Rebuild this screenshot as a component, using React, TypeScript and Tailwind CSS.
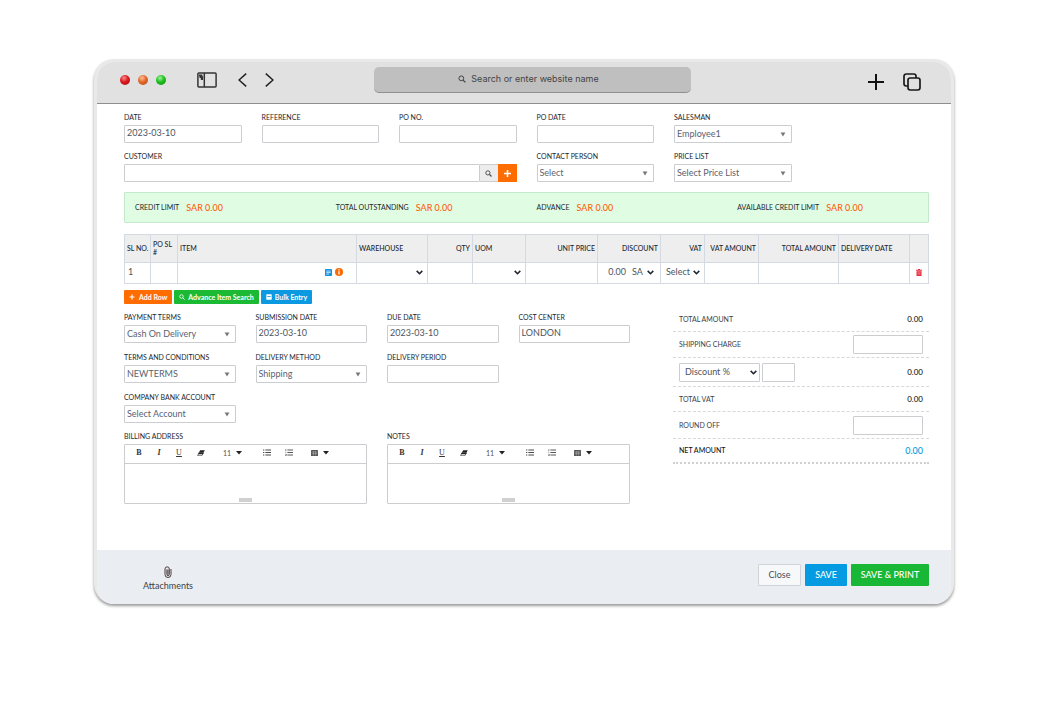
import React, { useId } from "react";

const fieldBox =
  "block h-[18px] w-full min-w-0 rounded-[1px] border border-[#cccdd1] bg-white px-[2px] text-[9px] leading-[12px] text-[#4d5560] outline-none";
const labelText = "block h-[10px] text-[7px] leading-[10px] text-[#23272e] whitespace-nowrap";

function Field({ label, value = "", className = "" }: { label: string; value?: string; className?: string }) {
  const id = useId();
  return (
    <div className={"min-w-0 " + className}>
      <label htmlFor={id} className={labelText}>{label}</label>
      <input id={id} type="text" defaultValue={value} className={fieldBox + " mt-[3px] pb-[3px]"} />
    </div>
  );
}

function SelectField({ label, value, className = "" }: { label: string; value: string; className?: string }) {
  const id = useId();
  return (
    <div className={"min-w-0 " + className}>
      <label htmlFor={id} className={labelText}>{label}</label>
      <div className="relative mt-[3px]">
        <select id={id} className={fieldBox + " appearance-none pr-4 text-[#5a5f72]"}>
          <option>{value}</option>
        </select>
        <svg viewBox="0 0 6 5" className="pointer-events-none absolute top-[7px] right-[6px] h-[5px] w-[6px]" fill="#777">
          <path d="M0.6 0.6h4.8L3 4.4z" />
        </svg>
      </div>
    </div>
  );
}

function Chevron({ className = "" }: { className?: string }) {
  return (
    <svg viewBox="0 0 7 5" className={"pointer-events-none h-[5px] w-[7px] " + className} fill="none" stroke="#1f2530" strokeWidth="1.6">
      <path d="M0.7 0.9L3.5 3.7L6.3 0.9" />
    </svg>
  );
}

function CellSelect({ label, value = "", className = "" }: { label: string; value?: string; className?: string }) {
  return (
    <div className={"relative " + className}>
      <select aria-label={label} className="block h-[18px] w-full appearance-none bg-transparent pr-2 pl-[2px] text-[9px] text-[#4d5560] outline-none">
        <option>{value}</option>
      </select>
      <Chevron className="absolute top-[7px] right-0" />
    </div>
  );
}

function SearchIcon({ className = "" }: { className?: string }) {
  return (
    <svg viewBox="0 0 8 8" className={className} fill="none" stroke="currentColor">
      <circle cx="3.3" cy="3.3" r="2.4" strokeWidth="1" />
      <path d="M5.1 5.1L7.4 7.4" strokeWidth="1.3" />
    </svg>
  );
}

function Titlebar() {
  return (
    <header className="flex h-[42px] items-center border-b border-[#8e8e8e] bg-[#e1e1e1] pr-[30px] pb-[5px] pl-[23px] text-[#222]">
      <div className="flex flex-1 items-center">
        <div className="flex gap-2">
          <span className="size-[10px] rounded-full bg-[radial-gradient(circle_at_40%_30%,#ff8a8a_0%,#d8191f_45%,#a00d12_100%)]" />
          <span className="size-[10px] rounded-full bg-[radial-gradient(circle_at_40%_30%,#ffc09a_0%,#e2672a_45%,#b34a17_100%)]" />
          <span className="size-[10px] rounded-full bg-[radial-gradient(circle_at_40%_30%,#9bf59b_0%,#1fbf1f_45%,#0f8a12_100%)]" />
        </div>
        <button aria-label="Sidebar" className="ml-[31px]">
          <svg viewBox="0 0 20 16" className="h-4 w-5" fill="none" stroke="#333" strokeWidth="1.5">
            <rect x="0.9" y="0.9" width="18.2" height="14.2" rx="1" />
            <path d="M7.3 1v14" />
            <path d="M2 3.4h3.4M2.500 5.200h3.600M3.800 7h2.200" strokeWidth="1.8" />
          </svg>
        </button>
        <button aria-label="Back" className="ml-[21px]">
          <svg viewBox="0 0 9 14" className="h-[14px] w-[9px]" fill="none" stroke="#222" strokeWidth="1.5">
            <path d="M8.2 0.6L1 7l7.2 6.4" />
          </svg>
        </button>
        <button aria-label="Forward" className="ml-[18px]">
          <svg viewBox="0 0 9 14" className="h-[14px] w-[9px]" fill="none" stroke="#222" strokeWidth="1.5">
            <path d="M0.8 0.6L8 7l-7.2 6.4" />
          </svg>
        </button>
      </div>
      <button className="ml-6 flex h-[26px] w-[317px] items-center justify-center gap-[5px] rounded-[5px] border-b border-[#909090] bg-[#bfbfbf] pr-2 pb-[2px] font-[Inter,sans-serif] text-[9px] text-[#444]">
        <SearchIcon className="size-2" />
        Search or enter website name
      </button>
      <div className="flex flex-1 items-center justify-end gap-[19px] pt-1">
        <button aria-label="New tab">
          <svg viewBox="0 0 16 16" className="size-4" stroke="#111" strokeWidth="2">
            <path d="M8 0v16M0 8h16" />
          </svg>
        </button>
        <button aria-label="Tabs">
          <svg viewBox="0 0 18 18" className="size-[18px]" fill="none" stroke="#1a1a1a" strokeWidth="1.7">
            <path d="M5 13H3.200a2.200 2.200 0 0 1-2.200-2.200V3.200A2.200 2.200 0 0 1 3.200 1h7.600A2.200 2.200 0 0 1 13 3.200V5" />
            <rect x="5" y="5" width="12" height="12" rx="2.200" />
          </svg>
        </button>
      </div>
    </header>
  );
}

const credit = ["CREDIT LIMIT", "TOTAL OUTSTANDING", "ADVANCE", "AVAILABLE CREDIT LIMIT"];

function ItemsTable() {
  const th = "border border-[#d5d9e2] px-[2px] pb-[2px] text-[7px] leading-[8px] font-medium text-[#23272e]";
  const td = "h-[21px] border border-[#d5d9e2] px-[3px] pt-0 pb-[2px] text-[9px] text-[#4d5560]";
  return (
    <table className="mt-[11px] w-full table-fixed border-collapse">
      <colgroup>
        <col className="w-[26px]" />
        <col className="w-[27px]" />
        <col />
        <col className="w-[71px]" />
        <col className="w-[45px]" />
        <col className="w-[53px]" />
        <col className="w-[72px]" />
        <col className="w-[63px]" />
        <col className="w-[44px]" />
        <col className="w-[54px]" />
        <col className="w-[80px]" />
        <col className="w-[71px]" />
        <col className="w-[19px]" />
      </colgroup>
      <thead>
        <tr className="h-[28px] bg-[#eeeeee] text-left">
          <th className={th + " whitespace-nowrap"}>SL NO.</th>
          <th className={th}>PO SL #</th>
          <th className={th}>ITEM</th>
          <th className={th}>WAREHOUSE</th>
          <th className={th + " text-right"}>QTY</th>
          <th className={th}>UOM</th>
          <th className={th + " text-right"}>UNIT PRICE</th>
          <th className={th + " text-right"}>DISCOUNT</th>
          <th className={th + " text-right"}>VAT</th>
          <th className={th + " text-right"}>VAT AMOUNT</th>
          <th className={th + " text-right"}>TOTAL AMOUNT</th>
          <th className={th}>DELIVERY DATE</th>
          <th className={th} aria-label="Actions" />
        </tr>
      </thead>
      <tbody>
        <tr>
          <td className={td}>1</td>
          <td className={td} />
          <td className={td}>
            <div className="flex items-center justify-end gap-[3px] pr-[10px]">
              <button aria-label="Description">
                <svg viewBox="0 0 7 7" className="size-[7px]">
                  <rect width="7" height="7" rx="0.800" fill="#1592dc" />
                  <path d="M1.300 2.100h4.400M1.300 3.600h4.400M1.300 5.100h2.600" stroke="#fff" strokeWidth="0.700" />
                </svg>
              </button>
              <button aria-label="Item information">
                <svg viewBox="0 0 8 8" className="size-2">
                  <circle cx="4" cy="4" r="4" fill="#fb6a02" />
                  <path d="M4 1.300v1.200M4 3.300v3.200" stroke="#fff" strokeWidth="1.200" />
                </svg>
              </button>
            </div>
          </td>
          <td className={td}><CellSelect label="Warehouse" className="mr-[1px]" /></td>
          <td className={td} />
          <td className={td}><CellSelect label="Unit of measure" className="mr-[1px]" /></td>
          <td className={td} />
          <td className={td}>
            <div className="flex items-center justify-end pr-[3px]">
              <span>0.00</span>
              <CellSelect label="Discount unit" value="SA" className="ml-1 w-[24px]" />
            </div>
          </td>
          <td className={td}><CellSelect label="VAT" value="Select" className="mr-[1px]" /></td>
          <td className={td} />
          <td className={td} />
          <td className={td} />
          <td className={td}>
            <button aria-label="Delete row" className="mx-auto block">
              <svg viewBox="0 0 6 7" className="h-[7px] w-[6px]" fill="#e8283c">
                <path d="M2 0h2v0.700h2v1H0v-1h2zM0.500 2.200h5V7h-5z" />
                <path d="M2 3v3M3 3v3M4 3v3" stroke="#f9b5bb" strokeWidth="0.400" />
              </svg>
            </button>
          </td>
        </tr>
      </tbody>
    </table>
  );
}

function Editor({ label }: { label: string }) {
  const id = useId();
  const caret = (
    <svg viewBox="0 0 6 4" className="h-1 w-[6px]" fill="#222"><path d="M0 0h6L3 3.600z" /></svg>
  );
  return (
    <div className="min-w-0">
      <label htmlFor={id} className={labelText}>{label}</label>
      <div className="mt-[3px] rounded-[1px] border border-[#cccdd1]">
        <div className="flex h-[19px] items-center border-b border-[#cccdd1] pb-[3px] pl-[10px] font-['Liberation_Serif',serif] text-[8px] leading-[10px] text-[#333]">
          <button aria-label="Bold" className="w-2 font-bold">B</button>
          <button aria-label="Italic" className="ml-3 w-2 font-bold italic">I</button>
          <button aria-label="Underline" className="ml-3 w-2 underline">U</button>
          <button aria-label="Clear formatting" className="ml-[14px]">
            <svg viewBox="0 0 8 6" className="h-[6px] w-2" fill="#222">
              <path d="M3.200 0.300H7.800L6.600 2.600H1.900z" />
              <path d="M1.800 3L6.300 3L4.900 5.700H0.600z" fill="#fff" stroke="#222" strokeWidth="0.600" />
              <path d="M1.900 2.400H6.800L6 4.200H1z" />
            </svg>
          </button>
          <button aria-label="Font size" className="ml-[18px] flex items-center gap-[5px] font-[Lato,sans-serif] text-[7px] text-[#555]">
            11{caret}
          </button>
          <button aria-label="Bulleted list" className="ml-[21px]">
            <svg viewBox="0 0 8 7" className="h-[7px] w-2" stroke="#333" strokeWidth="0.900">
              <path d="M0 1h1.300M2.400 1H8M0 3.500h1.300M2.400 3.500H8M0 6h1.300M2.400 6H8" />
            </svg>
          </button>
          <button aria-label="Numbered list" className="ml-[14px]">
            <svg viewBox="0 0 8 7" className="h-[7px] w-2" stroke="#444" strokeWidth="0.900">
              <path d="M2.400 1H8M2.400 3.500H8M2.400 6H8" />
              <path d="M0.800 0v2M0.200 3.200h1.200M0.200 5.300h1.200v1.200H0.200" strokeWidth="0.600" fill="none" />
            </svg>
          </button>
          <button aria-label="Table" className="ml-[18px] flex items-center gap-[5px]">
            <svg viewBox="0 0 7 6" className="h-[6px] w-[7px]">
              <rect width="7" height="6" rx="0.500" fill="#555" />
              <path d="M0.600 2h5.800M0.600 3.700h5.800M2.400 1v4.500M4.600 1v4.500" stroke="#bbb" strokeWidth="0.500" />
            </svg>
            {caret}
          </button>
        </div>
        <textarea id={id} className="block h-[34px] w-full resize-none px-1 text-[9px] outline-none" />
        <div className="mx-auto mb-[1px] h-1 w-[13px] bg-[#d0d0d0]" />
      </div>
    </div>
  );
}

function Totals() {
  const row = "flex items-center justify-between border-b border-dashed border-[#d8d8d8] pr-[6px] pl-[6px]";
  const name = "text-[7px] text-[#3a3f46]";
  const amount = "text-[8px] text-[#1b1f26] font-medium";
  const input = "h-[19px] w-[70px] rounded-[1px] border border-[#cccdd1] px-1 text-[9px] outline-none";
  return (
    <section className="mt-[3px] w-[256px] shrink-0">
      <div className={row + " h-[25px]"}>
        <span className={name}>TOTAL AMOUNT</span>
        <span className={amount}>0.00</span>
      </div>
      <div className={row + " h-[26px]"}>
        <label htmlFor="shipping" className={name}>SHIPPING CHARGE</label>
        <input id="shipping" type="text" className={input} />
      </div>
      <div className={row + " h-[29px]"}>
        <div className="flex gap-[2px]">
          <div className="relative">
            <select aria-label="Discount type" className="block h-[19px] w-[81px] appearance-none rounded-[1px] border border-[#cccdd1] bg-white pl-[5px] text-[9px] text-[#4d5560] outline-none">
              <option>Discount %</option>
            </select>
            <Chevron className="absolute top-[7px] right-[3px]" />
          </div>
          <input aria-label="Discount value" type="text" className="h-[19px] w-[33px] rounded-[1px] border border-[#cccdd1] px-1 text-[9px] outline-none" />
        </div>
        <span className={amount}>0.00</span>
      </div>
      <div className={row + " h-[25px]"}>
        <span className={name}>TOTAL VAT</span>
        <span className={amount}>0.00</span>
      </div>
      <div className={row + " h-[27px]"}>
        <label htmlFor="roundoff" className={name}>ROUND OFF</label>
        <input id="roundoff" type="text" className={input} />
      </div>
      <div className="flex h-[25px] items-center justify-between border-b-2 border-dotted border-[#d0d0d0] px-[6px]">
        <span className="text-[7px] font-medium text-[#0f1218]">NET AMOUNT</span>
        <span className="text-[9px] font-medium text-[#0c9be0]">0.00</span>
      </div>
    </section>
  );
}

export default function App() {
  const mini = "flex h-[14px] items-center gap-[3px] rounded-[1px] px-[5px] text-[7px] font-bold text-white whitespace-nowrap";
  return (
    <main className="min-h-screen bg-white pt-[59px] pr-[96px] pb-10 pl-[94px] font-[Lato,sans-serif]">
      <div className="overflow-hidden rounded-[20px] border-[3px] border-b-0 border-[#e9e9e9] bg-white shadow-[0_2px_3px_rgba(0,0,0,0.4)]">
        <Titlebar />
        <div className="min-h-[446px] pt-[8px] pr-[22px] pl-[27px]">
          <div className="grid grid-cols-6 gap-x-5 gap-y-2">
            <Field label="DATE" value="2023-03-10" />
            <Field label="REFERENCE" />
            <Field label="PO NO." />
            <Field label="PO DATE" />
            <SelectField label="SALESMAN" value="Employee1" />
            <div className="col-span-3 col-start-1">
              <label htmlFor="customer" className={labelText}>CUSTOMER</label>
              <div className="mt-[3px] flex">
                <input id="customer" type="text" className={fieldBox} />
                <button aria-label="Find customer" className="grid h-[18px] w-[18px] shrink-0 place-items-center border-y border-[#cccdd1] bg-[#ececec] text-[#444]">
                  <SearchIcon className="size-[7px]" />
                </button>
                <button aria-label="Add customer" className="grid h-[18px] w-[19px] shrink-0 place-items-center bg-[#ff6d00]">
                  <svg viewBox="0 0 7 7" className="size-[7px]" stroke="#fff" strokeWidth="1.600"><path d="M3.500 0v7M0 3.500h7" /></svg>
                </button>
              </div>
            </div>
            <SelectField label="CONTACT PERSON" value="Select" />
            <SelectField label="PRICE LIST" value="Select Price List" />
          </div>

          <div className="mt-[10px] grid h-[31px] grid-cols-4 items-center rounded-[1px] border border-[#c4e9cd] bg-[#e0fde3]">
            {credit.map((name) => (
              <div key={name} className="flex items-center gap-[7px] pl-[10px] whitespace-nowrap">
                <span className="text-[7px] text-[#23272e]">{name}</span>
                <span className="text-[9px] font-medium text-[#ff6010]">SAR 0.00</span>
              </div>
            ))}
          </div>

          <ItemsTable />

          <div className="mt-[6px] flex gap-[2px]">
            <button className={mini + " bg-[#ff6d00]"}>
              <svg viewBox="0 0 6 6" className="mr-[1px] size-[6px]" stroke="#fff" strokeWidth="1.200"><path d="M3 0.500v5M0.500 3h5" /></svg>
              Add Row
            </button>
            <button className={mini + " bg-[#1bb934]"}>
              <SearchIcon className="size-[6px]" />
              Advance Item Search
            </button>
            <button className={mini + " bg-[#0b9ae2]"}>
              <svg viewBox="0 0 6 6" className="size-[6px]"><rect x="0.300" y="0.300" width="5.400" height="5.400" rx="0.500" fill="#fff" /><path d="M1.200 2.500h3.600" stroke="#0b9ae2" strokeWidth="0.800" /></svg>
              Bulk Entry
            </button>
          </div>

          <div className="flex gap-[43px]">
            <div className="mt-2 min-w-0 flex-1">
              <div className="grid grid-cols-4 gap-x-5 gap-y-[9px]">
                <SelectField label="PAYMENT TERMS" value="Cash On Delivery" />
                <Field label="SUBMISSION DATE" value="2023-03-10" />
                <Field label="DUE DATE" value="2023-03-10" />
                <Field label="COST CENTER" value="LONDON" />
                <SelectField label="TERMS AND CONDITIONS" value="NEWTERMS" />
                <SelectField label="DELIVERY METHOD" value="Shipping" />
                <Field label="DELIVERY PERIOD" />
                <SelectField label="COMPANY BANK ACCOUNT" value="Select Account" className="col-start-1" />
              </div>
              <div className="mt-2 grid grid-cols-2 gap-x-5">
                <Editor label="BILLING ADDRESS" />
                <Editor label="NOTES" />
              </div>
            </div>
            <Totals />
          </div>
        </div>

        <footer className="flex h-[54px] items-center justify-between bg-[#eaeef3] pr-[22px] pb-1 pl-[46px]">
          <button className="flex flex-col items-center gap-[2px] pt-2 text-[9px] leading-[12px] text-[#3a3f46]">
            <svg viewBox="0 0 8 12" className="h-3 w-2" fill="none" stroke="#4b3b3b" strokeWidth="1">
              <path d="M4 3.500v5.300M7 3v5.500a3 3 0 0 1-6 0V3a2 2 0 0 1 4.300 0v5.500a1.200 1.200 0 0 1-2.400 0V3.500" />
            </svg>
            Attachments
          </button>
          <div className="flex gap-1 text-[9px]">
            <button className="h-[22px] w-[43px] rounded-[1px] border border-[#d0d3d8] bg-[#f7f8f9] text-[#4a4f57]">Close</button>
            <button className="h-[22px] w-[42px] rounded-[1px] bg-[#049be2] font-medium text-white">SAVE</button>
            <button className="h-[22px] w-[78px] rounded-[1px] bg-[#18b735] font-medium text-white">SAVE &amp; PRINT</button>
          </div>
        </footer>
      </div>
    </main>
  );
}
